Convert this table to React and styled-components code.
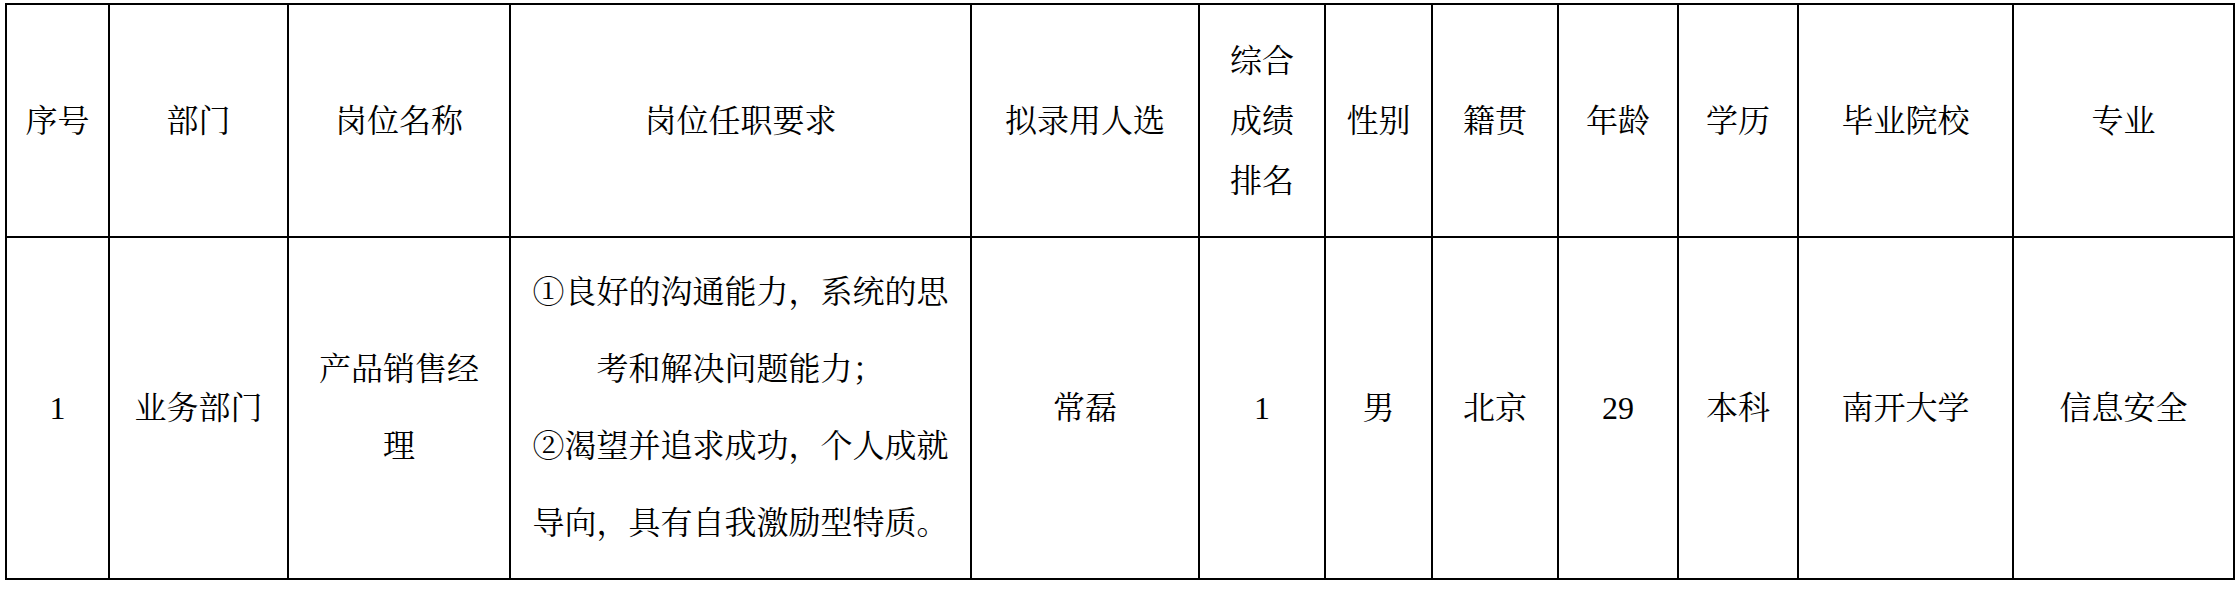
import React from "react";
import styled, { createGlobalStyle } from "styled-components";

const Global = createGlobalStyle`
  html, body {
    margin: 0;
    padding: 0;
    background: #ffffff;
  }
  body {
    font-family: "Liberation Serif", "Noto Serif CJK SC", "Noto Sans CJK SC", serif;
    color: #000000;
  }
`;

const Page = styled.div`
  padding: 3px 0 0 5px;
`;

const Table = styled.table`
  border-collapse: collapse;
  table-layout: fixed;
  width: 2230px;
  border: 2px solid #000;
  font-family: "Liberation Serif", "Noto Serif CJK SC", "Noto Sans CJK SC", serif;
  font-size: 32px;
  color: #000;
`;

const HeadCell = styled.th`
  border: 2px solid #000;
  height: 231px;
  padding: 0 16px;
  font-weight: normal;
  text-align: center;
  vertical-align: middle;
  line-height: 60px;
`;

const BodyCell = styled.td`
  border: 2px solid #000;
  height: 340px;
  padding: 0 ${(p) => (p.$tight ? 8 : 16)}px;
  text-align: center;
  vertical-align: middle;
  line-height: 77px;
  white-space: nowrap;
`;

const columns = [
  { w: 103, head: ["序号"], body: ["1"] },
  { w: 179, head: ["部门"], body: ["业务部门"] },
  { w: 222, head: ["岗位名称"], body: ["产品销售经", "理"] },
  {
    w: 461,
    head: ["岗位任职要求"],
    body: [
      "①良好的沟通能力，系统的思",
      "考和解决问题能力；",
      "②渴望并追求成功，个人成就",
      "导向，具有自我激励型特质。",
    ],
    tight: true,
  },
  { w: 228, head: ["拟录用人选"], body: ["常磊"] },
  { w: 126, head: ["综合", "成绩", "排名"], body: ["1"] },
  { w: 107, head: ["性别"], body: ["男"] },
  { w: 126, head: ["籍贯"], body: ["北京"] },
  { w: 120, head: ["年龄"], body: ["29"] },
  { w: 120, head: ["学历"], body: ["本科"] },
  { w: 215, head: ["毕业院校"], body: ["南开大学"] },
  { w: 221, head: ["专业"], body: ["信息安全"] },
];

const Lines = ({ lines }) =>
  lines.map((l, i) => (
    <React.Fragment key={i}>
      {i > 0 && <br />}
      {l}
    </React.Fragment>
  ));

export default function App() {
  return (
    <Page>
      <Global />
      <Table>
        <colgroup>
          {columns.map((c, i) => (
            <col key={i} style={{ width: c.w }} />
          ))}
        </colgroup>
        <thead>
          <tr>
            {columns.map((c, i) => (
              <HeadCell key={i}>
                <Lines lines={c.head} />
              </HeadCell>
            ))}
          </tr>
        </thead>
        <tbody>
          <tr>
            {columns.map((c, i) => (
              <BodyCell key={i} $tight={c.tight}>
                <Lines lines={c.body} />
              </BodyCell>
            ))}
          </tr>
        </tbody>
      </Table>
    </Page>
  );
}
